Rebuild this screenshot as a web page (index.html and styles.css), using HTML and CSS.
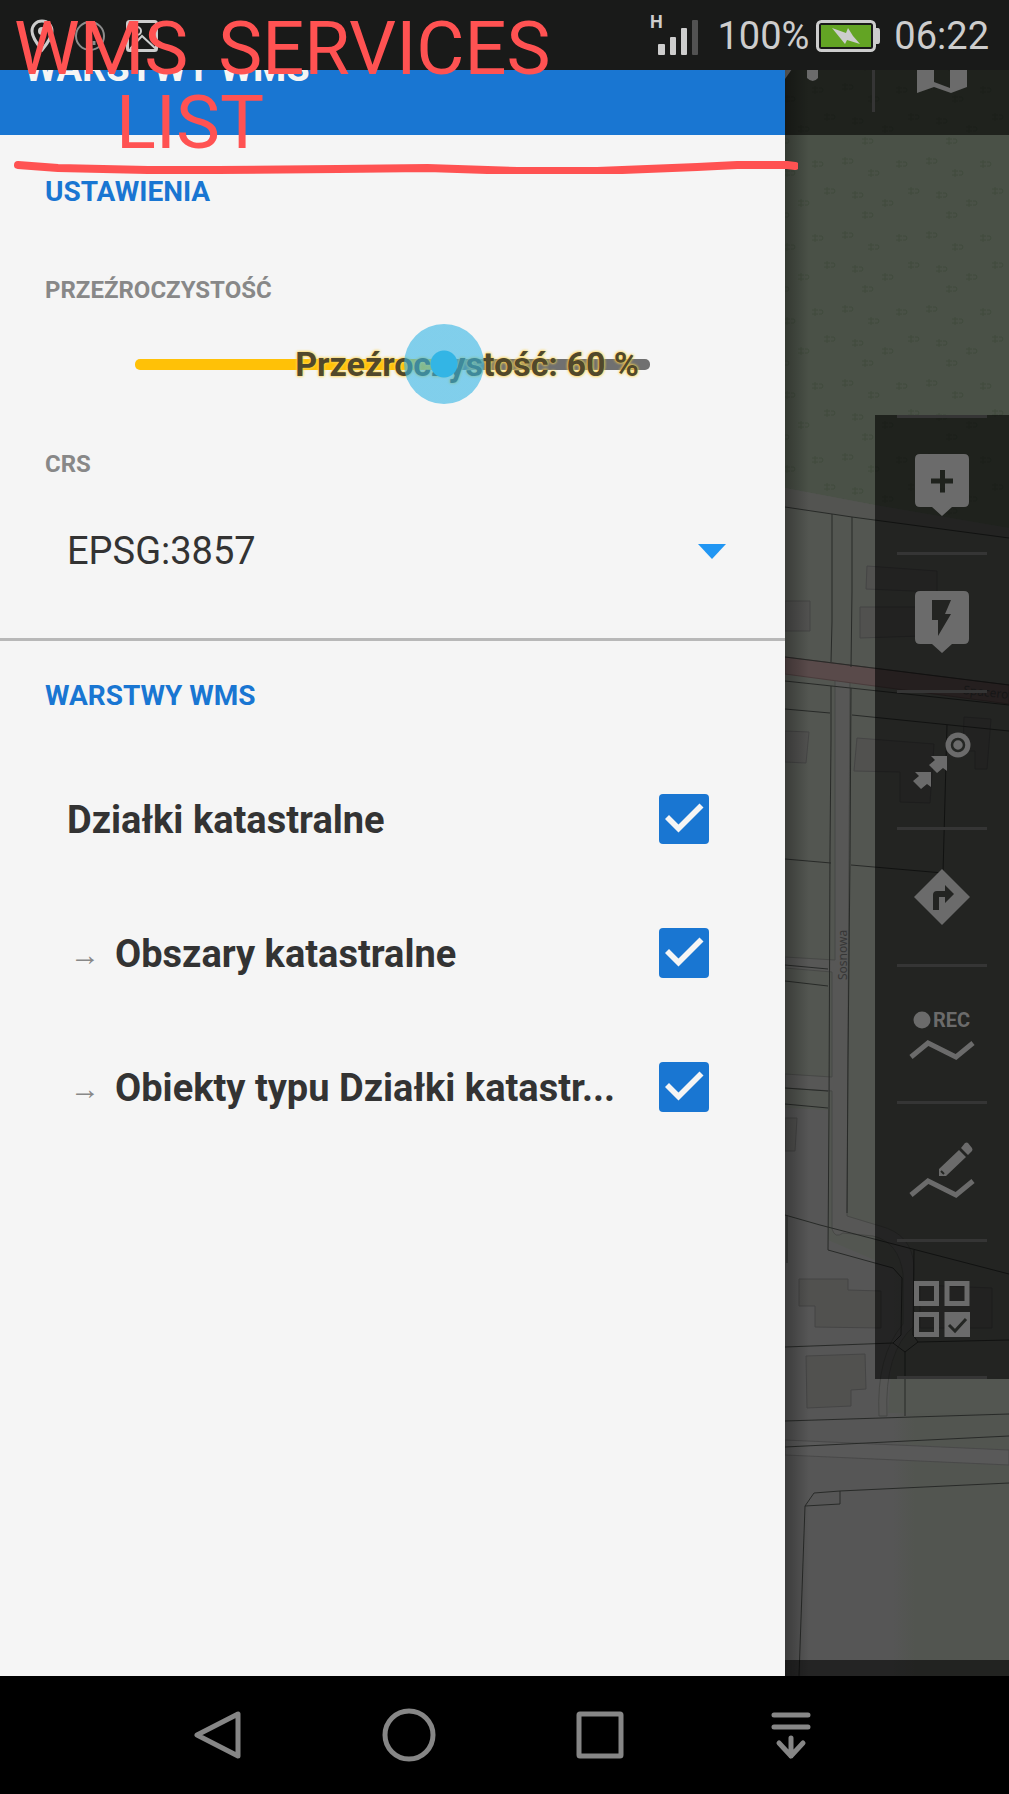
FILE: index.html
```
<!DOCTYPE html>
<html lang="pl">
<head>
    <meta charset="UTF-8">
    <meta name="viewport" content="width=device-width, initial-scale=1.0">
    <title>Warstwy WMS</title>
    <link rel="stylesheet" href="styles.css">
</head>
<body>
    <div class="status-bar">
        <div class="status-group notifications">
            <svg width="24" height="34" viewBox="0 0 24 34"><path d="M12 2C6 2 2 6.500 2 12c0 7 10 19 10 19s10-12 10-19C22 6.500 18 2 12 2z" fill="none" stroke="#cdcdcd" stroke-width="3"/><circle cx="12" cy="12" r="4" fill="#cdcdcd"/></svg>
            <svg width="32" height="34" viewBox="0 0 32 34"><circle cx="16" cy="17" r="14" fill="none" stroke="#8d8d8d" stroke-width="2"/><path d="M14 8v12M20 22v4" stroke="#8d8d8d" stroke-width="3"/></svg>
            <svg width="32" height="34" viewBox="0 0 32 34"><rect x="1.500" y="2.500" width="29" height="29" rx="2" fill="none" stroke="#cdcdcd" stroke-width="3"/><circle cx="11" cy="12" r="4" fill="none" stroke="#cdcdcd" stroke-width="2"/><path d="M4 30l12-13 14 13" fill="none" stroke="#cdcdcd" stroke-width="2"/></svg>
        </div>
        <div class="status-group system">
            <svg class="signal" width="50" height="44" viewBox="0 0 50 44">
                <text x="0" y="14" class="network">H</text>
                <rect x="8" y="30" width="7" height="11" rx="1" fill="#cdcdcd"/>
                <rect x="20" y="23" width="6" height="18" rx="1" fill="#cdcdcd"/>
                <rect x="31" y="14" width="6" height="27" rx="1" fill="#cdcdcd"/>
                <rect x="42" y="6" width="6" height="35" rx="1" fill="#525252"/>
            </svg>
            <span>100%</span>
            <svg class="battery" width="64" height="32" viewBox="0 0 64 32">
                <rect x="1.500" y="1.500" width="57" height="29" rx="4" fill="none" stroke="#cdcdcd" stroke-width="3"/>
                <rect x="5" y="5" width="50" height="22" fill="#63a424"/>
                <path d="M60 8h2q2 0 2 3v10q0 3-2 3h-2z" fill="#cdcdcd"/>
                <path d="M16 8l14 5 2-5 5 8 7 8-13-4-2 4z" fill="#cdcdcd"/>
            </svg>
            <span>06:22</span>
        </div>
    </div>

    <main class="screen">
        <aside class="drawer">
            <header class="drawer-header">
                <h1>WARSTWY WMS</h1>
            </header>

            <section class="settings">
                <h2>USTAWIENIA</h2>
                <label class="field-name" for="opacity">PRZEŹROCZYSTOŚĆ</label>
                <div class="slider">
                    <output class="slider-text" for="opacity">Przeźroczystość: 60 %</output>
                    <input type="range" id="opacity" min="0" max="100" value="60">
                </div>
                <label class="field-name crs-name" for="crs">CRS</label>
                <div class="select">
                    <select id="crs">
                        <option>EPSG:3857</option>
                    </select>
                </div>
            </section>

            <section class="layers">
                <h2>WARSTWY WMS</h2>
                <label class="layer">
                    <span class="layer-name">Działki katastralne</span>
                    <input type="checkbox" checked>
                </label>
                <label class="layer">
                    <span class="arrow">→</span>
                    <span class="layer-name">Obszary katastralne</span>
                    <input type="checkbox" checked>
                </label>
                <label class="layer">
                    <span class="arrow">→</span>
                    <span class="layer-name">Obiekty typu Działki katastr...</span>
                    <input type="checkbox" checked>
                </label>
            </section>
        </aside>

        <div class="map">
            <svg class="map-canvas" viewBox="785 0 224 1676" preserveAspectRatio="xMinYMin slice">
                <defs>
                    <pattern id="trees" width="84" height="74" patternUnits="userSpaceOnUse">
                        <g fill="none" stroke="#3f4a3c">
                            <path id="tree" d="M5 9v8M2 11h6M2 15h6M9 11h3q2 2 0 4h-3"/>
                            <use href="#tree" x="26" y="12"/>
                            <use href="#tree" x="54" y="3"/>
                            <use href="#tree" x="10" y="34"/>
                            <use href="#tree" x="40" y="42"/>
                            <use href="#tree" x="66" y="30"/>
                            <use href="#tree" x="20" y="54"/>
                        </g>
                    </pattern>
                    <linearGradient id="ground" x1="0" x2="1">
                        <stop offset="0.480" stop-color="#565656"/>
                        <stop offset="0.580" stop-color="#525550"/>
                    </linearGradient>
                </defs>
                <rect x="785" y="0" width="224" height="1676" fill="#535651"/>
                <!-- forest -->
                <path d="M785 0h224v528L875 505l-90-17z" fill="#4a5147"/>
                <path d="M785 0h224v528L875 505l-90-17z" fill="url(#trees)"/>
                <path d="M785 488l90 17 134 23v10L785 507z" fill="#535451"/>
                <!-- built-up ground -->
                <path d="M785 1108l43 2v130l65 28 9 10-1 57-8 8-5 70h121v263H785z" fill="url(#ground)"/>
                <!-- roads -->
                <path d="M785 957l50 3V680l15 1-3 535 33 10q32 8 34 40v60q-30 26-27 90h-8q-3-60 24-92v-50q-4-32-30-38l-30-3q-8 6-11-4V1091l-47-3v-14l47 3V972l-47-4z" fill="#575756" stroke="#474846"/>
                <path d="M785 1440l224 10v15l-224-10z" fill="#595959" stroke="#494949"/>
                <path d="M785 657l224 28v19l-224-30z" fill="#594a4a" stroke="#4a3c3c"/>
                <!-- buildings -->
                <g fill="#51514f" stroke="#454545">
                    <path d="M867 566l70 5v21l-71-3zM860 607h60v29l-60 2zM785 601h25v30h-25zM785 731l24 1-3 31-21-1zM857 738l77 6-4 59-30-1v-30l-46-1zM964 717l27 2-4 50h-12v-18h-12zM785 1118h12l-2 33h-10zM920 1285l72 3v40h-72z"/>
                    <path d="M799 1279h49v11l33 1v37l-66-1v-21h-16zM806 1356l59-2 1 35-15 1v16l-44 2z"/>
                </g>
                <!-- parcel borders -->
                <g fill="none" stroke="#282a28">
                    <path d="M785 507l47 7 20 3 157 21M832 514v108l-1 40M852 517v75l-1 75M785 657l224 28M785 681l224 24M831 686v54l-1 110-1 260-1 140 65 18 9 10-1 57-8 8-108 4M851 688l-1 170-2 200-1 155M785 709l45 4M852 715l157 16M947 725l-4 148M785 859l46 4M851 865l92 8M785 965l43 4M785 981l43 5M785 1088l43 3M785 1104l43 4M785 1215l35 10 189 49M787 1215v48M914 1250l-1 85 5 7 91-2M893 1343l12 9v64M918 1342l-13 10M785 1421l224-7M785 1447l224-11M1009 1483l-169 8-26 2-9 13 35-2v-13M805 1506l-6 170"/>
                </g>
                <text class="street" transform="translate(847 980) rotate(-90)">Sosnowa</text>
                <text class="street" transform="translate(963 694) rotate(6)">Spacerowa</text>
            </svg>

            <div class="map-top">
                <button class="more" aria-label="Więcej">
                    <svg width="56" height="56" viewBox="0 0 56 56"><path d="M0 0h12L0 17zM22 0h11v16q-5 6-11 0z" fill="#6b6b6b"/></svg>
                </button>
                <button class="maps" aria-label="Mapy">
                    <svg width="50" height="50" viewBox="0 0 50 50"><path d="M0 6L17 0l16 6 17-6v44l-16 6-17-6-17 6zM17 6v33l16 6V12z" fill="#6b6b6b" fill-rule="evenodd"/></svg>
                </button>
            </div>

            <div class="toolbar">
                <button aria-label="Dodaj punkt">
                    <svg viewBox="0 0 66 66"><path d="M11 2h44q5 0 5 5v43q0 5-5 5H43L33 64 23 55H11q-5 0-5-5V7q0-5 5-5zM31 18v8.500h-9v5h9v9h5v-9h8v-5h-8V18z" fill="#6b6b6b" fill-rule="evenodd"/></svg>
                </button>
                <button aria-label="Szybki punkt">
                    <svg viewBox="0 0 66 66"><path d="M11 2h44q5 0 5 5v43q0 5-5 5H43L33 64 23 55H11q-5 0-5-5V7q0-5 5-5zM23 11v20h6v16l13-22h-6l6-14z" fill="#6b6b6b" fill-rule="evenodd"/></svg>
                </button>
                <button aria-label="Prowadź do celu">
                    <svg viewBox="0 0 66 66"><circle cx="49" cy="18" r="12.500" fill="#6b6b6b"/><circle cx="49" cy="18" r="6" fill="none" stroke="#242623" stroke-width="2.500"/><path d="M22 29h16v15l-4-3-6 5-8-8 6-5zM6 45h16v15l-4-3-6 5-8-8 6-5z" fill="#6b6b6b"/></svg>
                </button>
                <button aria-label="Nawigacja">
                    <svg viewBox="0 0 66 66"><path d="M33 5l28 28-28 28L5 33zM36 21v6h-8q-4 0-4 4v15h6V33h6v6l9-9z" fill="#6b6b6b" fill-rule="evenodd"/></svg>
                </button>
                <button aria-label="Nagrywaj trasę">
                    <svg viewBox="0 0 66 66"><circle cx="13" cy="19" r="8.500" fill="#6b6b6b"/><text x="24" y="26" class="rec">REC</text><path d="M2 56l17-14 28 14 17-14" fill="none" stroke="#6b6b6b" stroke-width="5"/></svg>
                </button>
                <button aria-label="Rysuj trasę">
                    <svg viewBox="0 0 66 66"><path d="M30 37v-7l20-19 7 7-20 19zM52 9l4-5q2-1 3 0l4 5q1 2 0 3l-4 4z" fill="#6b6b6b"/><path d="M32 32l3 3" stroke="#242623" stroke-width="2"/><path d="M2 56l17-14 28 14 17-14" fill="none" stroke="#6b6b6b" stroke-width="5"/></svg>
                </button>
                <button aria-label="Wszystkie funkcje">
                    <svg viewBox="0 0 66 66"><path d="M7.500 7.500h20v20h-20zM38 7.500h20v20H38zM7.500 38.500h20v20h-20z" fill="none" stroke="#6b6b6b" stroke-width="5"/><path d="M35.500 36H61v25H35.500z" fill="#6b6b6b"/><path d="M40 49l6 6 11-12" fill="none" stroke="#242623" stroke-width="3"/></svg>
                </button>
            </div>
            <div class="map-bottom"></div>
        </div>
    </main>

    <nav class="nav-bar">
        <button aria-label="Wstecz"><svg viewBox="0 0 56 56"><path d="M49 7v42L8 28z"/></svg></button>
        <button aria-label="Ekran główny"><svg viewBox="0 0 56 56"><circle cx="28" cy="28" r="24"/></svg></button>
        <button aria-label="Ostatnie"><svg viewBox="0 0 56 56"><rect x="7" y="7" width="42" height="42" rx="1"/></svg></button>
        <button aria-label="Powiadomienia"><svg viewBox="0 0 56 56"><path d="M10 8h34M10 20h34M27 31v18M15 36l12 13 12-13"/></svg></button>
    </nav>

    <!-- red marker notes over the screen -->
    <div class="notes">
        <p class="note-line"><span>WMS</span><span>SERVICES</span></p>
        <p class="note-line note-second">LIST</p>
        <svg class="note-rule" viewBox="0 0 785 14" preserveAspectRatio="none"><path d="M4 5l40 3 90 2h70l120-1 90-1 90 3h80l100-4 40-2h50l8 1"/></svg>
    </div>
</body>
</html>
```
FILE: styles.css
```
* {
    box-sizing: border-box;
}

body {
    margin: 0;
    min-height: 100vh;
    display: flex;
    flex-direction: column;
    position: relative;
    overflow-x: hidden;
    background: #000;
    color: #333;
    font-family: Roboto, "Liberation Sans", sans-serif;
}

h1, h2, p {
    margin: 0;
}

button {
    display: flex;
    align-items: center;
    justify-content: center;
    margin: 0;
    padding: 0;
    border: 0;
    background: none;
    cursor: pointer;
}

/* Status bar */
.status-bar {
    position: absolute;
    top: 0;
    left: 0;
    right: 0;
    z-index: 2;
    height: 70px;
    padding: 2px 20px 0 30px;
    display: flex;
    align-items: center;
    justify-content: space-between;
    background: #191a19;
    color: #cdcdcd;
    font-size: 38px;
    line-height: 44px;
}

.status-group {
    display: flex;
    align-items: center;
}

.notifications {
    gap: 20px;
}

.signal {
    margin-right: 17px;
}

.battery {
    margin: 0 14px 0 7px;
}

.network {
    font-size: 18px;
    font-weight: bold;
    fill: #cdcdcd;
}

/* Screen */
.screen {
    flex: 1;
    display: flex;
}

.drawer {
    width: 77.8%;
    background: #f5f5f5;
}

.drawer-header {
    height: 135px;
    padding: 0 24px;
    display: flex;
    align-items: center;
    background: #1976d2;
    color: #f5f5f5;
}

.drawer-header h1 {
    font-size: 38px;
    font-weight: bold;
}

.drawer h2 {
    color: #1976d2;
    font-size: 28px;
    line-height: 40px;
}

.settings {
    padding: 37px 45px 57px;
    border-bottom: 3px solid #b8b8b8;
}

.field-name {
    display: block;
    margin-top: 60px;
    color: #888;
    font-size: 24px;
    font-weight: bold;
    line-height: 36px;
}

.crs-name {
    margin-top: 42px;
}

.slider {
    position: relative;
    height: 80px;
    margin: 16px 90px 0;
    display: flex;
    align-items: center;
}

.slider::before {
    content: "";
    width: 100%;
    height: 11px;
    border-radius: 5px;
    background: linear-gradient(to right, #ffc107 60%, #707070 60%);
}

.slider-text {
    position: absolute;
    right: 11px;
    color: #51482b;
    font-size: 34px;
    font-weight: bold;
    line-height: 40px;
    white-space: nowrap;
    text-shadow: 0 0 3px #ffd54f, 0 0 3px #ffd54f;
}

.slider input {
    appearance: none;
    position: absolute;
    left: -40px;
    right: -40px;
    width: calc(100% + 80px);
    height: 80px;
    margin: 0;
    background: transparent;
}

.slider input::-webkit-slider-thumb {
    appearance: none;
    width: 80px;
    height: 80px;
    border-radius: 50%;
    background: radial-gradient(circle, #33b5e5 13px, rgba(51, 181, 229, 0.6) 14px);
}

.select {
    display: flex;
    align-items: center;
    margin: 39px 14px 0 22px;
}

.select select {
    appearance: none;
    flex: 1;
    height: 60px;
    padding: 0;
    border: 0;
    background: transparent;
    color: #333;
    font-family: inherit;
    font-size: 38px;
}

.select::after {
    content: "";
    border: 14px solid transparent;
    border-top: 15px solid #2196f3;
    border-bottom: 0;
}

.layers {
    padding: 35px 45px;
}

.layers h2 {
    margin-bottom: 36px;
}

.layer {
    height: 134px;
    padding: 0 31px 0 22px;
    display: flex;
    align-items: center;
    gap: 12px;
    font-size: 38px;
    font-weight: bold;
}

.layer-name {
    flex: 1;
    padding-top: 2px;
    white-space: nowrap;
}

.arrow {
    width: 36px;
    padding-top: 4px;
    color: #888;
    font-family: "Liberation Sans", sans-serif;
    font-size: 30px;
    font-weight: normal;
    text-align: center;
}

.layer input {
    appearance: none;
    flex: none;
    width: 50px;
    height: 50px;
    margin: 0;
    border-radius: 4px;
    background: #1976d2;
}

.layer input:checked::after {
    content: "";
    display: block;
    height: 100%;
    background: #f5f5f5;
    clip-path: polygon(12% 50%, 20% 42%, 39% 61%, 81% 19%, 89% 27%, 39% 77%);
}

/* Map */
.map {
    flex: 1;
    position: relative;
    overflow: hidden;
    background: #535651;
}

.map-canvas {
    position: absolute;
    width: 100%;
    height: 100%;
}

.map::after {
    content: "";
    position: absolute;
    top: 0;
    bottom: 0;
    left: 0;
    width: 24px;
    background: linear-gradient(to right, rgba(0, 0, 0, 0.3), transparent);
}

.map-top {
    position: absolute;
    top: 0;
    left: 0;
    right: 0;
    height: 135px;
    display: flex;
    align-items: center;
    background: rgba(0, 0, 0, 0.58);
}

.more {
    flex: 1;
    height: 88px;
    justify-content: flex-start;
    align-items: flex-end;
    border-right: 3px solid #353535;
}

.more svg {
    margin-bottom: -6px;
}

.maps {
    width: 134px;
    height: 88px;
}

.toolbar {
    position: absolute;
    top: 415px;
    right: 0;
    bottom: 297px;
    width: 134px;
    display: flex;
    flex-direction: column;
    background: rgba(0, 0, 0, 0.58);
}

.toolbar button {
    flex: 1;
    margin: 0 22px;
    border-bottom: 3px solid #353535;
}

.toolbar button:first-child {
    border-top: 3px solid #353535;
}

.toolbar svg {
    flex: none;
    width: 66px;
    height: 66px;
}

.rec {
    fill: #6b6b6b;
    font-family: Roboto, sans-serif;
    font-size: 20px;
    font-weight: bold;
}

.street {
    fill: #363636;
    font-family: "Noto Sans", sans-serif;
    font-size: 12px;
}

.map-bottom {
    position: absolute;
    left: 0;
    right: 0;
    bottom: 0;
    height: 16px;
    background: rgba(0, 0, 0, 0.58);
}

/* Navigation bar */
.nav-bar {
    height: 118px;
    padding: 0 12%;
    display: flex;
    background: #000;
}

.nav-bar button {
    flex: 1;
}

.nav-bar svg {
    width: 56px;
    height: 56px;
    fill: none;
    stroke: #868686;
    stroke-width: 5;
    stroke-linecap: round;
    stroke-linejoin: round;
}

/* Notes */
.notes {
    position: absolute;
    top: 12px;
    left: 14px;
    right: 0;
    z-index: 3;
    color: #ff5252;
    font-size: 74px;
    font-weight: 400;
    line-height: 74px;
    pointer-events: none;
}

.note-line {
    display: flex;
    gap: 30px;
}

.note-second {
    margin-left: 102px;
}

.note-rule {
    display: block;
    width: 78.8%;
    height: 14px;
    fill: none;
    stroke: #ff5252;
    stroke-width: 8;
    stroke-linecap: round;
    stroke-linejoin: round;
}
```
